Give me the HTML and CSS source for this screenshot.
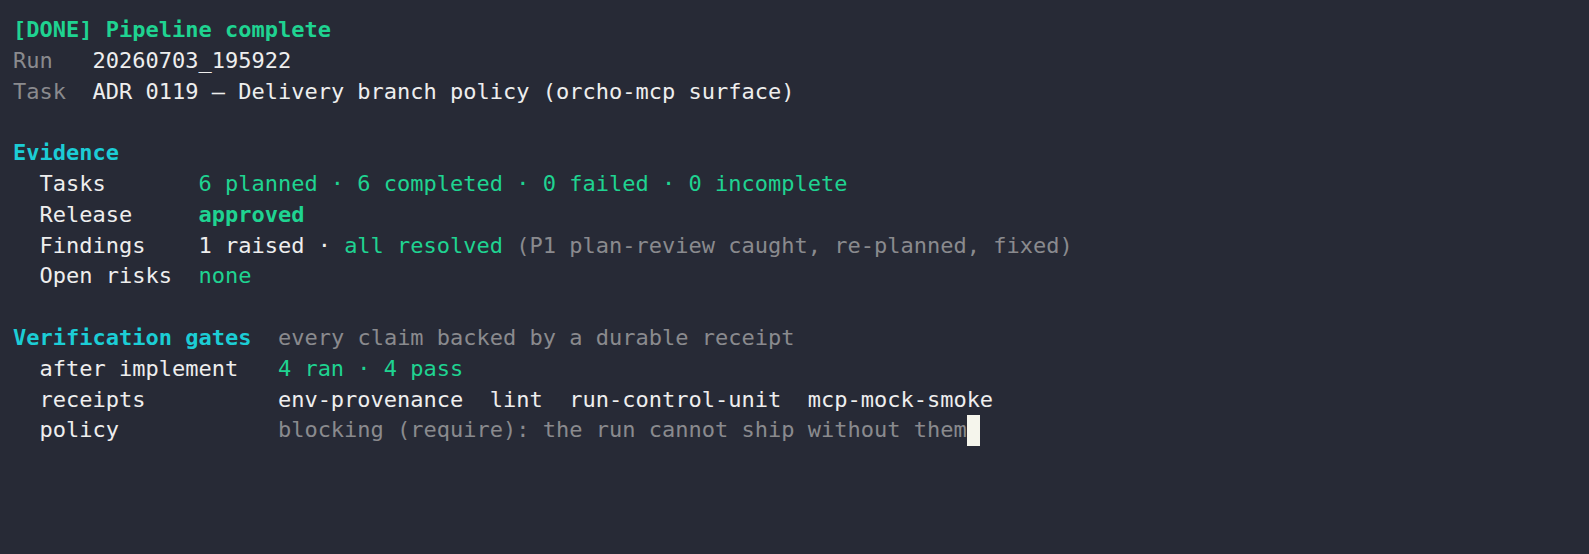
FILE: index.html
```html
<!DOCTYPE html>
<html lang="en">
<head>
<meta charset="utf-8">
<title>Pipeline complete</title>
<link rel="stylesheet" href="styles.css">
</head>
<body>
<main class="term">
  <div class="line title">[DONE] Pipeline complete</div>
  <div class="kv head">
    <span class="dim">Run</span><span class="fg">20260703_195922</span>
    <span class="dim">Task</span><span class="fg">ADR 0119 — Delivery branch policy (orcho-mcp surface)</span>
  </div>
  <div class="line blank"></div>
  <div class="line section">Evidence</div>
  <div class="kv evidence">
    <span class="fg">Tasks</span><span class="ok">6 planned · 6 completed · 0 failed · 0 incomplete</span>
    <span class="fg">Release</span><span class="ok strong">approved</span>
    <span class="fg">Findings</span><span><span class="fg">1 raised · </span><span class="ok">all resolved</span> <span class="dim">(P1 plan-review caught, re-planned, fixed)</span></span>
    <span class="fg">Open risks</span><span class="ok">none</span>
  </div>
  <div class="line blank"></div>
  <div class="line"><span class="section">Verification gates</span>  <span class="dim">every claim backed by a durable receipt</span></div>
  <div class="kv gates">
    <span class="fg">after implement</span><span class="ok">4 ran · 4 pass</span>
    <span class="fg">receipts</span><span class="receipts fg"><span>env-provenance</span><span>lint</span><span>run-control-unit</span><span>mcp-mock-smoke</span></span>
    <span class="fg">policy</span><span><span class="dim">blocking (require): the run cannot ship without them</span><span class="cursor"></span></span>
  </div>
</main>
</body>
</html>
```
FILE: styles.css
```css
html, body {
  margin: 0;
  padding: 0;
  background: #272a36;
  height: 100%;
}
.term {
  padding: 15px 13px;
  font-family: "DejaVu Sans Mono", monospace;
  font-size: 22px;
  line-height: 30.8px;
  color: #eeeeee;
}
.line {
  height: 30.8px;
  white-space: pre;
}
.kv > span {
  white-space: pre;
}
.title {
  color: #1fd391;
  font-weight: bold;
}
.section {
  color: #1ccdd5;
  font-weight: bold;
}
.dim { color: #8a8a8e; }
.fg { color: #eeeeee; }
.ok { color: #1fd391; }
.strong { font-weight: bold; }
.kv {
  display: grid;
  grid-auto-rows: 30.8px;
}
.head { grid-template-columns: 6ch 1fr; }
.evidence { grid-template-columns: 12ch 1fr; padding-left: 2ch; }
.gates { grid-template-columns: 18ch 1fr; padding-left: 2ch; }
.receipts {
  display: flex;
  gap: 2ch;
}
.cursor {
  display: inline-block;
  width: 1ch;
  height: 30.8px;
  vertical-align: top;
  background: #f5f5ec;
}
```
